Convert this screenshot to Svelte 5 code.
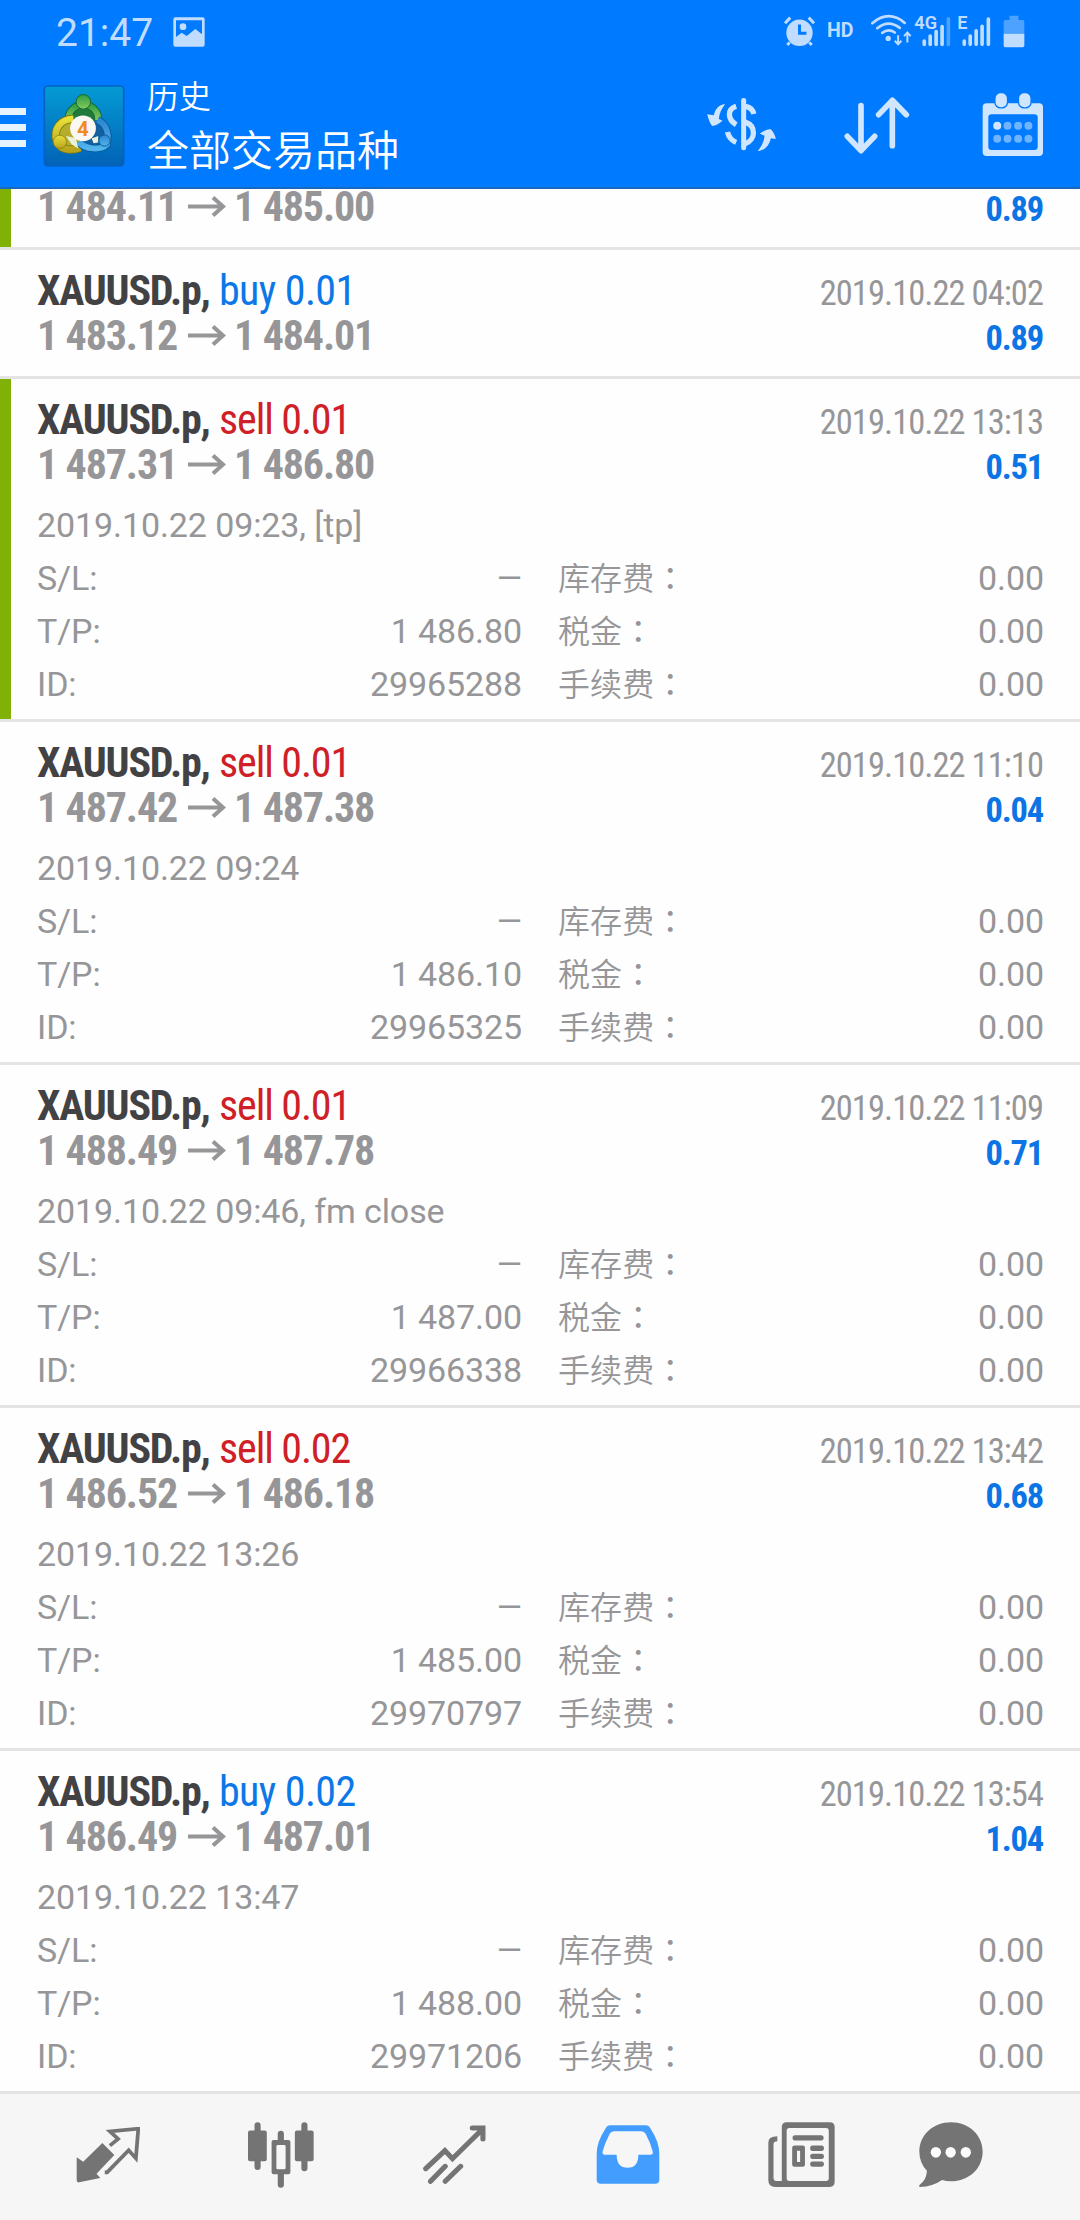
<script>
  const deals = [
    { open: '1 484.11', close: '1 485.00', profit: '0.89', marked: true },
    { side: 'buy', volume: '0.01', open: '1 483.12', close: '1 484.01', time: '2019.10.22 04:02', profit: '0.89' },
    { side: 'sell', volume: '0.01', open: '1 487.31', close: '1 486.80', time: '2019.10.22 13:13', profit: '0.51', marked: true, note: '2019.10.22 09:23, [tp]', tp: '1 486.80', id: '29965288' },
    { side: 'sell', volume: '0.01', open: '1 487.42', close: '1 487.38', time: '2019.10.22 11:10', profit: '0.04', note: '2019.10.22 09:24', tp: '1 486.10', id: '29965325' },
    { side: 'sell', volume: '0.01', open: '1 488.49', close: '1 487.78', time: '2019.10.22 11:09', profit: '0.71', note: '2019.10.22 09:46, fm close', tp: '1 487.00', id: '29966338' },
    { side: 'sell', volume: '0.02', open: '1 486.52', close: '1 486.18', time: '2019.10.22 13:42', profit: '0.68', note: '2019.10.22 13:26', tp: '1 485.00', id: '29970797' },
    { side: 'buy', volume: '0.02', open: '1 486.49', close: '1 487.01', time: '2019.10.22 13:54', profit: '1.04', note: '2019.10.22 13:47', tp: '1 488.00', id: '29971206' }
  ];

  const details = (d) => [
    ['S/L:', '—', '库存费'],
    ['T/P:', d.tp, '税金'],
    ['ID:', d.id, '手续费']
  ];
</script>

<div class="screen">
  <header>
    <div class="status">
      <span class="clock">21:47</span>
      <svg class="photo" viewBox="519 50 96 90">
        <path fill-rule="evenodd" d="M526 51h82q6 0 6 6v76q0 6-6 6h-82q-6 0-6-6V57q0-6 6-6zM528 60v50l17-13 15 10 26-21 20 16V60z" />
        <circle cx="549" cy="79" r="10" />
      </svg>
      <svg class="alarm" viewBox="310 45 100 97">
        <circle cx="360" cy="99" r="40" />
        <path class="line" d="M316 70l16-17M404 70l-16-17M330 128l-7 8M390 128l7 8" />
        <path class="cut" d="M360 74v26h21" />
      </svg>
      <span class="hd">HD</span>
      <svg class="wifi" viewBox="570 40 130 104">
        <path class="line" d="M577 70Q626 28 675 69M592 85Q626 58 660 84M607 99Q626 85 645 98" />
        <circle cx="625" cy="116" r="8" />
        <path class="thin" d="M655 106v26M645 123l10 11 10-11M683 128v-28M673 109l10-11 10 11" />
      </svg>
      <svg class="cell" viewBox="703 40 115 104">
        <text x="704" y="88">4G</text>
        <path class="bars" d="M734 124v10M752 109v25M770 95v39M788 80v54" />
        <path class="bars dim" d="M807 57v77" />
      </svg>
      <svg class="edge" viewBox="832 40 106 104">
        <text x="833" y="88">E</text>
        <path class="bars" d="M854 124v10M872 109v25M890 93v41M908 79v55M927 57v77" />
      </svg>
      <svg class="battery" viewBox="967 45 67 100">
        <path class="dim-fill" d="M969 102V65q0-5 5-5h13V47h27v13h13q5 0 5 5v37z" />
        <path d="M969 102h63v36q0 5-5 5h-53q-5 0-5-5z" />
      </svg>
    </div>

    <div class="toolbar">
      <div class="menu"><i></i><i></i><i></i></div>
      <svg class="logo" viewBox="22 24 246 248">
        <defs>
          <linearGradient id="sky" x1="0" y1="0" x2="0" y2="1"><stop offset="0" stop-color="#049bd4" /><stop offset="1" stop-color="#0262b6" /></linearGradient>
          <linearGradient id="green" x1="0" y1="0" x2="0" y2="1"><stop offset="0" stop-color="#2f9d46" /><stop offset="1" stop-color="#85c95b" /></linearGradient>
          <linearGradient id="gold" x1="0" y1="0" x2="0" y2="1"><stop offset="0" stop-color="#e7df3a" /><stop offset="1" stop-color="#b9a51d" /></linearGradient>
          <linearGradient id="blue" x1="0" y1="0" x2="0" y2="1"><stop offset="0" stop-color="#2c86cf" /><stop offset="1" stop-color="#51b4ed" /></linearGradient>
        </defs>
        <rect x="25" y="27" width="240" height="242" rx="10" fill="url(#sky)" stroke="#0561c4" stroke-width="5" />
        <circle cx="143" cy="114" r="42" fill="#1f7a3c" />
        <ellipse cx="102" cy="172" rx="40" ry="44" fill="#b5ae2c" />
        <ellipse cx="178" cy="172" rx="38" ry="38" fill="#135f9f" />
        <path d="M98 126a45 45 0 1 1 90 4" fill="none" stroke="#12632c" stroke-width="23" />
        <path d="M98 126a45 45 0 1 1 90 4" fill="none" stroke="url(#green)" stroke-width="18" />
        <path d="M113 126C72 128 52 158 62 194C72 220 104 224 134 214" fill="none" stroke="#7c7912" stroke-width="25" />
        <path d="M113 126C72 128 52 158 62 194C72 220 104 224 134 214" fill="none" stroke="url(#gold)" stroke-width="20" />
        <path d="M186 130C212 142 222 170 214 204C196 222 150 220 128 196" fill="none" stroke="#095b9c" stroke-width="24" />
        <path d="M186 130C212 142 222 170 214 204C196 222 150 220 128 196" fill="none" stroke="url(#blue)" stroke-width="18" />
        <path d="M90 178l30 6 8 32-20-12zM168 186l20-8v20l-14 2z" fill="#e9f0dc" />
        <circle cx="143" cy="75" r="22" fill="url(#green)" stroke="#15662f" stroke-width="3" />
        <circle cx="72" cy="196" r="20" fill="url(#gold)" stroke="#7c7912" stroke-width="2" />
        <circle cx="207" cy="192" r="17" fill="url(#blue)" stroke="#095b9c" stroke-width="3" />
        <circle cx="142" cy="155" r="39" fill="#fbf8f4" />
        <text x="142" y="177" text-anchor="middle">4</text>
      </svg>
      <div class="titles">
        <span class="sub">历史</span>
        <span class="main">全部交易品种</span>
      </div>
      <svg class="currency" viewBox="27 39 212 162">
        <path d="M84 60C64 62 54 76 50 94L30 91C34 106 38 118 45 126Q60 124 76 110L65 105C66 88 74 74 84 60zM236 165C234 154 228 142 220 135Q204 136 188 149L202 155C200 174 192 190 181 202C206 198 216 184 221 163z" />
        <rect x="132" y="42" width="15" height="157" rx="7" />
        <path class="stroke" d="M117 67C89 76 91 106 117 122M91 144Q96 166 117 175M144 67C158 69 167 76 170 90M144 114C178 126 176 168 144 179" />
      </svg>
      <svg class="sort" viewBox="490 291 198 171">
        <path d="M541 317v134M500 409l41 43 41-43M635 437V301M594 344l41-43 42 43" />
      </svg>
      <svg class="calendar" viewBox="904 276 187 194">
        <path fill-rule="evenodd" d="M918 309h158q12 0 12 12v135q0 12-12 12H918q-12 0-12-12V321q0-12 12-12zM933 342q-10 0-10 10v88q0 10 10 10h129q10 0 10-10v-88q0-10-10-10z" />
        <rect class="ring" x="943" y="277" width="38" height="46" rx="17" />
        <rect class="ring" x="1014" y="277" width="38" height="46" rx="17" />
        <circle cx="950" cy="377" r="12" />
        <g class="dots">
          <circle cx="981" cy="377" r="12" /><circle cx="1013" cy="377" r="12" /><circle cx="1044" cy="377" r="12" />
          <circle cx="950" cy="416" r="12" /><circle cx="981" cy="416" r="12" /><circle cx="1013" cy="416" r="12" /><circle cx="1044" cy="416" r="12" />
        </g>
      </svg>
    </div>
  </header>

  <main>
    {#each deals as d}
      <article class:marked={d.marked} class:partial={!d.side}>
        {#if d.side}
          <div class="line1">
            <span class="symbol">XAUUSD.p,</span>
            <span class="side {d.side}">{d.side} {d.volume}</span>
            <span class="time">{d.time}</span>
          </div>
        {/if}
        <div class="line2">
          <span>{d.open}</span>
          <svg class="arrow" viewBox="0 0 38 21"><path d="M0 10.5h35M25 1.5l10 9-10 9" /></svg>
          <span>{d.close}</span>
          <span class="profit">{d.profit}</span>
        </div>
        {#if d.id}
          <div class="details">
            <div class="note">{d.note}</div>
            {#each details(d) as [label, value, fee]}
              <div class="row">
                <span>{label}</span>
                <span class="value" class:dash={value === '—'}>{value}</span>
                <span class="fee">{fee}<b>：</b></span>
                <span class="value">0.00</span>
              </div>
            {/each}
          </div>
        {/if}
      </article>
    {/each}
  </main>

  <nav>
    <svg viewBox="219 142 187 168" preserveAspectRatio="none" style:width="64px" style:height="56px">
      <path d="M296 190L331 226 279 282 290 295 228 308Q221 309 221 302V233L240 246z" />
      <path class="outline" d="M318 198L342 178 318 155 401 147 394 236 373 212 310 278H303" />
    </svg>
    <svg viewBox="717 126 193 197" preserveAspectRatio="none" style:width="66px" style:height="66px">
      <path fill-rule="evenodd" d="M723 151h13v-15q0-9 9-9t9 9v15h12q6 0 6 6v80q0 6-6 6h-12v17q0 9-9 9t-9-9v-17h-13q-6 0-6-6v-80q0-6 6-6zM860 151h13v-15q0-9 9-9t9 9v15h12q6 0 6 6v80q0 6-6 6h-12v21q0 9-9 9t-9-9v-21h-13q-6 0-6-6v-80q0-6 6-6zM792 180h12v-19q0-9 9-9t9 9v19h13q6 0 6 6v90q0 6-6 6h-13v31q0 9-9 9t-9-9v-31h-12q-6 0-6-6v-90q0-6 6-6zM804 195q-4 0-4 4v64q0 4 4 4h19q4 0 4-4v-64q0-4-4-4z" />
    </svg>
    <svg viewBox="1224 133 184 177" preserveAspectRatio="none" style:width="63px" style:height="59px">
      <path class="trend" d="M1232 264L1288 210 1310 234 1396 147M1368 142H1399V175M1246 302L1289 257M1289 302L1334 257" />
    </svg>
    <svg class="active" viewBox="161 133 186 177" preserveAspectRatio="none" style:width="64px" style:height="59px">
      <path fill-rule="evenodd" d="M202 134H306Q314 134 318 141Q346 185 345 220V297Q345 309 333 309H175Q163 309 163 297V220Q162 185 190 141Q194 134 202 134zM215 152Q204 152 199 163Q186 190 180 213Q179 222 187 222H221Q221 261 253 261Q284 261 284 222H318Q328 222 326 213Q320 188 307 163Q302 152 292 152z" />
    </svg>
    <svg viewBox="663 125 194 193" preserveAspectRatio="none" style:width="67px" style:height="65px">
      <path fill-rule="evenodd" d="M717 126H842Q856 126 856 140V302Q856 318 842 318H684Q664 318 664 298V186Q664 167 690 167V182Q679 183 679 190V293Q679 300 686 300H703V140Q703 126 717 126zM725 143Q717 143 717 151V292Q717 300 725 300H831Q839 300 839 292V151Q839 143 831 143zM741 164H817Q824 164 824 172T817 180H741Q734 180 734 172T741 164zM740 195H764Q770 195 770 201V252Q770 258 764 258H740Q733 258 733 252V201Q733 195 740 195zM747 210V244H756V210zM792 195H818Q825 195 825 203T818 211H792Q785 211 785 203T792 195zM792 219H818Q825 219 825 227T818 235H792Q785 235 785 227T792 219zM792 242H818Q825 242 825 250T818 258H792Q785 258 785 250T792 242z" />
    </svg>
    <svg viewBox="1101 125 186 193" preserveAspectRatio="none" style:width="64px" style:height="65px">
      <path d="M1194 126C1246 126 1286 164 1286 213S1246 301 1194 301Q1180 301 1168 297Q1142 316 1103 318Q1100 315 1103 311Q1123 298 1124 270Q1102 245 1102 213C1102 164 1142 126 1194 126z" />
      <g class="holes"><ellipse cx="1150" cy="215" rx="15" ry="16" /><ellipse cx="1193" cy="215" rx="15" ry="16" /><ellipse cx="1237" cy="215" rx="15" ry="16" /></g>
    </svg>
  </nav>
</div>

<style>
  :global(body) { margin: 0; background: #fff; }
  .screen { width: 1080px; height: 2220px; display: flex; flex-direction: column; overflow: hidden; background: #fefefe; font-family: Roboto, 'Noto Sans CJK SC', sans-serif; }
  svg { display: block; flex: none; }

  header { height: 189px; flex: none; box-sizing: border-box; background: #007aff; border-bottom: 2px solid #1769bd; color: #fff; }
  .status { display: flex; height: 64px; padding-left: 56px; fill: #c0ddff; color: #c0ddff; }
  .clock { font-size: 39px; line-height: 46px; padding-top: 10px; width: 117px; }
  .photo { width: 32px; height: 30px; margin-top: 17px; }
  .alarm { width: 33px; height: 32px; margin: 15px 0 0 578px; }
  .status .line { fill: none; stroke: #c0ddff; stroke-width: 9; }
  .status .cut { fill: none; stroke: #007aff; stroke-width: 9; }
  .hd { font-size: 19.5px; font-weight: 700; line-height: 22px; margin: 20px 0 0 11px; width: 43px; }
  .wifi { width: 43px; height: 35px; margin-top: 13px; }
  .wifi .line { stroke-width: 8; stroke-linecap: round; }
  .thin { fill: none; stroke: #c0ddff; stroke-width: 6; }
  .cell, .edge { height: 35px; margin-top: 13px; }
  .cell { width: 38px; margin-left: 1px; }
  .edge { width: 35px; margin-left: 5px; }
  .status text { font: 600 55px Roboto, sans-serif; }
  .bars { fill: none; stroke: #c0ddff; stroke-width: 11; stroke-linecap: round; }
  .bars.dim { stroke: #4da2ff; }
  .dim-fill { fill: #4da2ff; }
  .battery { width: 22px; height: 33px; margin: 15px 0 0 11px; }

  .toolbar { display: flex; height: 123px; fill: #d0e6ff; }
  .menu { width: 26px; padding-top: 44px; display: flex; flex-direction: column; gap: 9px; }
  .menu i { height: 7px; background: #e6f3ff; }
  .logo { width: 82px; height: 82px; margin: 21px 0 0 17px; }
  .logo text { font: 700 62px Roboto, sans-serif; fill: #f08a24; }
  .titles { margin-left: 22px; width: 559px; display: flex; flex-direction: column; font-family: 'Noto Sans CJK SC', sans-serif; font-weight: 350; }
  .sub { font-size: 32px; line-height: 46px; padding-top: 7px; }
  .main { font-size: 42px; line-height: 62px; }
  .currency { width: 71px; height: 54px; margin-top: 33px; }
  .stroke { fill: none; stroke: #d0e6ff; stroke-width: 16; }
  .sort { width: 66px; height: 57px; margin: 33px 0 0 67px; }
  .sort path { fill: none; stroke: #d0e6ff; stroke-width: 17; stroke-linecap: round; stroke-linejoin: round; }
  .calendar { width: 62px; height: 65px; margin: 28px 0 0 72px; }
  .ring { stroke: #007aff; stroke-width: 4; }
  .dots { fill: #70b3ff; }

  main { height: 1905px; flex: none; overflow: hidden; display: flex; flex-direction: column; justify-content: flex-end; color: #969698; }
  article { flex: none; box-sizing: border-box; height: 129px; padding: 18px 37px 0; border-bottom: 3px solid #e4e4e4; }
  article:has(.details) { height: 343px; }
  .partial { height: 66px; padding-top: 0; }
  .marked { box-shadow: inset 11px 0 #80b106; }
  .line1, .line2 { display: flex; align-items: baseline; height: 45px; line-height: 45px; font-size: 42px; font-stretch: 75%; white-space: pre; }
  .symbol { width: 182px; font-weight: 700; color: #424244; letter-spacing: -1.2px; }
  .side { letter-spacing: -0.6px; }
  .buy { color: #0c78e8; }
  .sell { color: #cf2027; letter-spacing: -1.1px; }
  .time, .profit { margin-left: auto; font-size: 34.5px; letter-spacing: -0.95px; }
  .line2 { font-weight: 700; letter-spacing: -1.15px; }
  .arrow { width: 38px; height: 21px; margin: 0 8px 0 11px; align-self: center; }
  .arrow path { fill: none; stroke: #969698; stroke-width: 4; }
  .profit { color: #0c74e4; letter-spacing: -1.2px; }

  .details { margin-top: 12px; font-size: 34px; line-height: 53px; font-weight: 370; letter-spacing: -0.1px; }
  .note { height: 53px; }
  .row { display: grid; grid-template-columns: 130px 355px 244px 278px; height: 53px; }
  .value { text-align: right; }
  .fee { margin-left: 36px; font: 350 32px/49px 'Noto Sans CJK SC', sans-serif; white-space: nowrap; letter-spacing: 0.1px; }
  .fee b { font-weight: 400; font-family: 'Noto Sans CJK JP', sans-serif; }
  .dash { transform-origin: right; transform: scaleX(0.95); }

  nav { flex: 1; display: grid; grid-template-columns: repeat(5, 173.5px) 125px; padding-left: 21px; align-items: center; justify-items: center; background: #f6f6f6; fill: #747474; }
  nav svg { margin-bottom: 5px; }
  .outline { fill: none; stroke: #747474; stroke-width: 11; }
  .trend { fill: none; stroke: #747474; stroke-width: 15; stroke-linecap: round; }
  .active { fill: #429dff; }
  .holes { fill: #fcfcfc; }
</style>
